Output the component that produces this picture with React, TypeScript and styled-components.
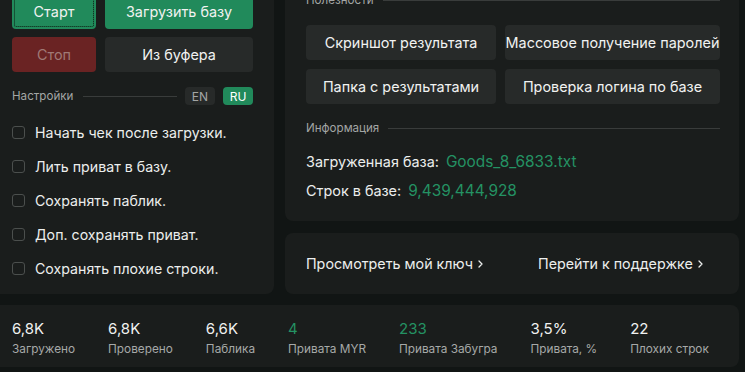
import React from "react";
import styled, { createGlobalStyle } from "styled-components";

const Global = createGlobalStyle`
  html, body { margin: 0; padding: 0; background: #111514; overflow: hidden; }
  body { font-family: Inter, "Noto Sans", "Liberation Sans", sans-serif; color: #eef0ef; -webkit-font-smoothing: antialiased; }
  * { box-sizing: border-box; }
`;

const Page = styled.div`
  width: 747px;
  margin: -26px 0 0 -8px;
  display: grid;
  grid-template-columns: 282px 454px;
  column-gap: 11px;
  row-gap: 11px;
`;

const Panel = styled.section`
  background: #1a1d1c;
  border-radius: 8px;
`;

const LeftPanel = styled(Panel)`
  padding: 20px 21px 15px 20px;
  display: flex;
  flex-direction: column;
`;

const ButtonGrid = styled.div<{ $cols: string; $rowGap: number; $colGap: number }>`
  display: grid;
  grid-template-columns: ${(p) => p.$cols};
  row-gap: ${(p) => p.$rowGap}px;
  column-gap: ${(p) => p.$colGap}px;
`;

const Button = styled.button<{ $variant?: "green" | "red" | "gray"; $focus?: boolean }>`
  height: 35px;
  border: none;
  border-radius: 4px;
  font-family: inherit;
  font-size: 14.4px;
  padding: 0;
  white-space: nowrap;
  background: ${(p) => (p.$variant === "green" ? "#218a5b" : p.$variant === "red" ? "#6a2323" : "#272a29")};
  color: ${(p) => (p.$variant === "red" ? "#a07976" : "#f1f2f1")};
  outline: ${(p) => (p.$focus ? "1px dotted #0c1a12" : "none")};
  outline-offset: -3px;
`;

const SectionHead = styled.div<{ $mt: number }>`
  display: flex;
  align-items: center;
  height: 14px;
  margin-top: ${(p) => p.$mt}px;
`;

const SectionLabel = styled.span`
  font-size: 11.6px;
  color: #a3a6a5;
  white-space: nowrap;
`;

const Rule = styled.div`
  flex: 1;
  height: 1px;
  background: #393c3b;
  margin-left: 9px;
`;

const SettingsHead = styled.div`
  display: flex;
  align-items: center;
  height: 18px;
  margin-top: 15px;
`;

const SettingsRule = styled(Rule)`
  margin: 0 8px 0 10px;
`;

const LangPill = styled.span<{ $active?: boolean }>`
  width: 30px;
  height: 18px;
  border-radius: 4px;
  display: inline-flex;
  align-items: center;
  justify-content: center;
  font-size: 12px;
  margin-left: ${(p) => (p.$active ? 8 : 0)}px;
  background: ${(p) => (p.$active ? "#218a5b" : "#272a29")};
  color: ${(p) => (p.$active ? "#ffffff" : "#a3a6a5")};
`;

const CheckList = styled.div`
  display: flex;
  flex-direction: column;
  gap: 14px;
  margin-top: 17px;
`;

const CheckRow = styled.label`
  display: flex;
  align-items: center;
  height: 20px;
  font-size: 14.2px;
  color: #eceeed;
  white-space: nowrap;
`;

const Box = styled.span`
  width: 13px;
  height: 13px;
  border: 1.5px solid #4b4f4d;
  border-radius: 3px;
  margin-right: 10px;
  flex: none;
`;

const RightCol = styled.div`
  display: flex;
  flex-direction: column;
  gap: 12px;
`;

const RightTop = styled(Panel)`
  padding: 19px 19px 21px 21px;
  display: flex;
  flex-direction: column;
`;

const Tools = styled(ButtonGrid)`
  margin-top: 18px;
`;

const InfoRows = styled.div`
  display: flex;
  flex-direction: column;
  gap: 9px;
  margin-top: 16px;
`;

const InfoRow = styled.div`
  display: flex;
  align-items: center;
  height: 20px;
  font-size: 14.4px;
  color: #eceeed;
  white-space: nowrap;
`;

const Green = styled.span`
  color: #249263;
  font-size: 15.4px;
  margin-left: 7px;
`;

const LinksPanel = styled(Panel)`
  height: 61px;
  padding: 0 21px;
  display: flex;
  align-items: center;
  gap: 55px;
`;

const LinkItem = styled.a`
  display: inline-flex;
  align-items: center;
  gap: 5px;
  font-size: 14.3px;
  color: #eceeed;
  text-decoration: none;
  white-space: nowrap;
`;

const Stats = styled(Panel)`
  grid-column: 1 / span 2;
  height: 62px;
  padding: 15px 20px 0 20px;
  display: flex;
  gap: 33px;
`;

const Stat = styled.div`
  display: flex;
  flex-direction: column;
  gap: 4px;
  white-space: nowrap;
`;

const StatValue = styled.span<{ $green?: boolean }>`
  font-size: 15px;
  line-height: 18px;
  color: ${(p) => (p.$green ? "#249263" : "#f0f1f0")};
`;

const StatLabel = styled.span`
  font-size: 11.8px;
  line-height: 15px;
  color: #a6a9a8;
`;

const Chevron = () => (
  <svg width="5" height="8" viewBox="0 0 5 8" fill="none">
    <path d="M1 1 L4 4 L1 7" stroke="#eceeed" strokeWidth="1.3" strokeLinecap="round" strokeLinejoin="round" />
  </svg>
);

const settings = [
  "Начать чек после загрузки.",
  "Лить приват в базу.",
  "Сохранять паблик.",
  "Доп. сохранять приват.",
  "Сохранять плохие строки.",
];

const stats = [
  { v: "6,8K", l: "Загружено" },
  { v: "6,8K", l: "Проверено" },
  { v: "6,6K", l: "Паблика" },
  { v: "4", l: "Привата MYR", g: true },
  { v: "233", l: "Привата Забугра", g: true },
  { v: "3,5%", l: "Привата, %" },
  { v: "22", l: "Плохих строк" },
];

export default function App() {
  return (
    <>
      <Global />
      <Page>
        <LeftPanel>
          <ButtonGrid $cols="84px 148px" $rowGap={8} $colGap={9}>
            <Button $variant="green" $focus>Старт</Button>
            <Button $variant="green">Загрузить базу</Button>
            <Button $variant="red">Стоп</Button>
            <Button>Из буфера</Button>
          </ButtonGrid>
          <SettingsHead>
            <SectionLabel>Настройки</SectionLabel>
            <SettingsRule />
            <LangPill>EN</LangPill>
            <LangPill $active>RU</LangPill>
          </SettingsHead>
          <CheckList>
            {settings.map((s) => (
              <CheckRow key={s}>
                <Box />
                {s}
              </CheckRow>
            ))}
          </CheckList>
        </LeftPanel>
        <RightCol>
          <RightTop>
            <SectionHead $mt={0}>
              <SectionLabel>Полезности</SectionLabel>
              <Rule />
            </SectionHead>
            <Tools $cols="190px 215px" $rowGap={9} $colGap={9}>
              <Button>Скриншот результата</Button>
              <Button>Массовое получение паролей</Button>
              <Button>Папка с результатами</Button>
              <Button>Проверка логина по базе</Button>
            </Tools>
            <SectionHead $mt={17}>
              <SectionLabel>Информация</SectionLabel>
              <Rule />
            </SectionHead>
            <InfoRows>
              <InfoRow>
                Загруженная база:<Green>Goods_8_6833.txt</Green>
              </InfoRow>
              <InfoRow>
                Строк в базе:<Green>9,439,444,928</Green>
              </InfoRow>
            </InfoRows>
          </RightTop>
          <LinksPanel>
            <LinkItem>
              Просмотреть мой ключ <Chevron />
            </LinkItem>
            <LinkItem>
              Перейти к поддержке <Chevron />
            </LinkItem>
          </LinksPanel>
        </RightCol>
        <Stats>
          {stats.map((s) => (
            <Stat key={s.l}>
              <StatValue $green={s.g}>{s.v}</StatValue>
              <StatLabel>{s.l}</StatLabel>
            </Stat>
          ))}
        </Stats>
      </Page>
    </>
  );
}
